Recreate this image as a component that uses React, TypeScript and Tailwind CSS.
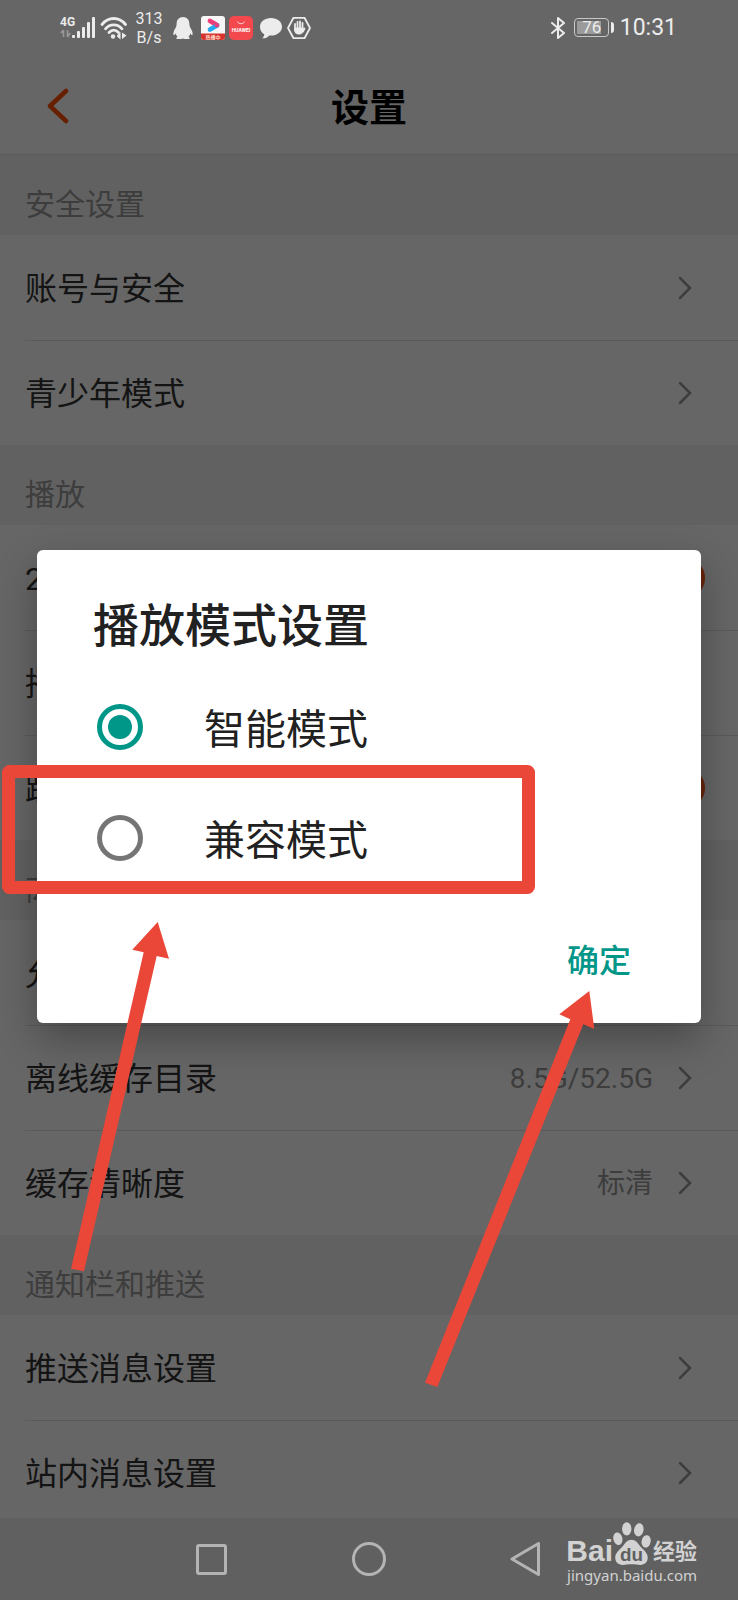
import { useState } from 'react'

type Row = { label: string; value?: string; toggle?: boolean }
type Section = { title: string; rows: Row[] }

const sections: Section[] = [
  { title: '安全设置', rows: [{ label: '账号与安全' }, { label: '青少年模式' }] },
  {
    title: '播放',
    rows: [
      { label: '2G/3G/4G网络播放', toggle: true },
      { label: '播放模式设置' },
      { label: '跳过片头片尾', toggle: true },
    ],
  },
  {
    title: '离线缓存',
    rows: [
      { label: '允许非WiFi缓存' },
      { label: '离线缓存目录', value: '8.5G/52.5G' },
      { label: '缓存清晰度', value: '标清' },
    ],
  },
  { title: '通知栏和推送', rows: [{ label: '推送消息设置' }, { label: '站内消息设置' }] },
]

const modes = ['智能模式', '兼容模式']

function StatusBar() {
  return (
    <div className="relative z-20 flex h-[54px] shrink-0 items-center justify-between pt-px pr-[61px] pl-[60px] text-[#ececec]">
      <div className="flex items-center">
        <svg className="h-6 w-9" viewBox="0 0 36 24" fill="currentColor">
          <text x="0" y="10" fontSize="12" fontWeight="700" fontFamily="Roboto, sans-serif">
            4G
          </text>
          <path d="M3.5 14v7M1 17l2.5-3M7.5 14v7M7.5 21l2.5-4z" stroke="#9a9a9a" strokeWidth="1.6" fill="none" />
          <rect x="12" y="19" width="3" height="3" rx="1" />
          <rect x="17" y="15" width="3" height="7" rx="1" />
          <rect x="22" y="11" width="3" height="11" rx="1" />
          <rect x="27" y="6" width="3" height="16" rx="1" />
          <rect x="32" y="1" width="3" height="21" rx="1" />
        </svg>
        <svg className="ml-1 h-6 w-[27px]" viewBox="0 0 27 24" fill="none" stroke="currentColor" strokeWidth="2.8" strokeLinecap="round">
          <path d="M2 8.5C8.500 0.500 19 0.500 25.500 8.500" />
          <path d="M5.500 12.800C10 7.500 17.500 7.500 22 12.800" />
          <path d="M9 16.500C12 13.300 15.500 13.300 18.500 16.500" />
          <circle cx="13" cy="20.500" r="2.200" fill="currentColor" stroke="none" />
          <path d="M17 19.500L20.500 16V23.500L17 20.500zM22 16.500L26.500 19.500L22 23z" fill="currentColor" stroke="none" />
        </svg>
        <div className="ml-2 w-7 text-center text-base leading-[19px]">
          313
          <br />
          B/s
        </div>
        <svg className="ml-2 h-6 w-6" viewBox="0 0 24 24" fill="currentColor">
          <path d="M12 1C7.800 1 5.600 4 5.600 8c0 2-.5 3-1.500 4.700C2.800 14.800 2 17 2.500 18.800c.4 1 1.300 0 2.100-1.200.3 1.300 1 2.400 2 3.300-1 .4-1.600.9-1.300 1.500.5.8 4.700.8 6.700 0 2 .8 6.200.8 6.700 0 .3-.6-.3-1.100-1.300-1.500 1-.9 1.700-2 2-3.300.8 1.200 1.700 2.200 2.100 1.200.5-1.800-.3-4-1.600-6.100-1-1.700-1.500-2.700-1.500-4.700C18.400 4 16.200 1 12 1z" />
        </svg>
        <svg className="ml-1.5 h-6 w-6" viewBox="0 0 24 24">
          <rect width="24" height="24" rx="3" fill="#f7f7f7" />
          <path d="M0 17.500h24V21a3 3 0 0 1-3 3H3a3 3 0 0 1-3-3z" fill="#d8322c" />
          <path d="M9 5L16 9" stroke="#ee3d79" strokeWidth="4.800" strokeLinecap="round" />
          <path d="M9 13.500L16 9.500" stroke="#24a8f0" strokeWidth="4.600" strokeLinecap="round" />
          <circle cx="15.800" cy="9.200" r="2.300" fill="#e9407c" />
          <text x="12" y="22.500" fontSize="5" fontWeight="700" fill="#ffd9c8" textAnchor="middle">
            热播中
          </text>
        </svg>
        <svg className="ml-1 h-6 w-6" viewBox="0 0 24 24">
          <rect width="24" height="24" rx="5" fill="#f2484e" />
          <path d="M8.500 5.500a3.600 3 0 0 0 7 0" fill="none" stroke="#ffd0d0" strokeWidth="1" />
          <text x="12" y="16" fontSize="5" fontWeight="700" fill="#fff" textAnchor="middle">
            HUAWEI
          </text>
        </svg>
        <svg className="ml-1.5 h-6 w-6" viewBox="0 0 24 24" fill="currentColor">
          <path d="M12 2c6.300 0 11 3.700 11 8.700s-4.700 8.800-11 8.800c-.6 0-1.200 0-1.800-.1C8.500 21.500 6 22.500 3.300 22.300c1.300-1.200 2-2.600 2-4C2.600 16.700 1 14.200 1 10.700 1 5.700 5.700 2 12 2z" />
        </svg>
        <svg className="ml-1 h-6 w-6" viewBox="0 0 24 24" fill="none" stroke="currentColor" strokeWidth="1.800" strokeLinejoin="round">
          <path d="M6.500 1.800h11L23 12l-5.500 10.200h-11L1 12z" />
          <path
            d="M8 14V8M10.500 12V6M13 12V5.500M15.500 12.500V7M17.500 12.500l-1.500 3"
            strokeWidth="1.800"
            strokeLinecap="round"
          />
          <path d="M7.100 11.500h9.300v2.500c0 2.500-1.500 4.500-4.400 4.500s-4.900-2-4.900-4.500z" fill="currentColor" stroke="none" />
        </svg>
      </div>
      <div className="flex items-center">
        <svg className="h-6 w-4" viewBox="0 0 16 24" fill="none" stroke="currentColor" strokeWidth="2" strokeLinejoin="round" strokeLinecap="round">
          <path d="M2 7l12 10-6 5V2l6 5L2 17" />
        </svg>
        <div className="ml-2 flex h-[19px] w-[35px] items-center rounded-[4px] border border-[#c8c8c8] p-0.5">
          <div className="flex h-full w-6 items-center justify-center bg-[#9b9b9b]">
            <span className="ml-1.5 text-[17px] leading-none">76</span>
          </div>
        </div>
        <div className="ml-0.5 h-[11px] w-[3px] rounded-r-sm bg-current" />
        <span className="ml-1.5 text-[23px] leading-none">10:31</span>
      </div>
    </div>
  )
}

function SettingRow({ row }: { row: Row }) {
  const [on, setOn] = useState(true)

  if (row.toggle) {
    return (
      <label className="flex h-[105px] items-center justify-between pr-[33px]">
        <span className="pt-0.5 text-[32px] leading-none">{row.label}</span>
        <input
          type="checkbox"
          role="switch"
          checked={on}
          onChange={() => setOn(!on)}
          className="h-10 w-20 appearance-none rounded-full bg-[#ffb699] before:block before:size-10 before:rounded-full before:bg-[#999] checked:before:ml-auto checked:before:bg-[#ff5a1f]"
        />
      </label>
    )
  }

  return (
    <button type="button" className="flex h-[105px] w-full items-center pr-[45px] text-left">
      <span className="flex-1 pt-0.5 text-[32px] leading-none">{row.label}</span>
      {row.value && <span className="pt-0.5 text-[28px] leading-none text-[#999]">{row.value}</span>}
      <svg className="ml-6 h-6 w-4" viewBox="0 0 16 24" fill="none" stroke="#999" strokeWidth="2.500" strokeLinecap="round">
        <path d="M3 2l10 10L3 22" />
      </svg>
    </button>
  )
}

function ModeDialog() {
  const [mode, setMode] = useState(modes[0])

  return (
    <div className="absolute inset-0 z-10 flex items-center bg-black/60 px-[37px] pb-[27px]">
      <div
        role="dialog"
        aria-labelledby="mode-title"
        className="w-full rounded-md bg-white pt-[51px] pb-9 text-[#212121] shadow-[0_16px_40px_rgba(0,0,0,0.3)]"
      >
        <h2 id="mode-title" className="pl-14 text-[46px] leading-[50px] font-medium">
          播放模式设置
        </h2>
        <div className="pt-5">
          {modes.map((m) => (
            <label key={m} className="flex h-[111px] items-center pl-[60px]">
              <input
                type="radio"
                name="mode"
                checked={mode === m}
                onChange={() => setMode(m)}
                className="grid size-[46px] appearance-none place-items-center rounded-full border-[5px] border-[#757575] before:size-6 before:rounded-full checked:border-[#009688] checked:before:bg-[#009688]"
              />
              <span className="ml-[61px] pt-2 text-[41px] leading-none">{m}</span>
            </label>
          ))}
        </div>
        <div className="flex justify-end pt-[42px] pr-[70px]">
          <button type="button" className="text-[32px] leading-[52px] font-medium text-[#009688]">
            确定
          </button>
        </div>
      </div>
    </div>
  )
}

function Annotations() {
  return (
    <svg className="pointer-events-none absolute top-0 left-0 z-30 h-[1600px] w-[738px]" viewBox="0 0 738 1600" fill="#ea4738">
      <rect x="8.500" y="771.500" width="520" height="116" rx="1" fill="none" stroke="#ea4738" strokeWidth="13" strokeLinejoin="round" />
      <path d="M157.700 922L169 958.700L156.700 956L84 1271.300L71 1268.700L143.700 952.300L132.300 949.700z" />
      <path d="M589.300 991L594.300 1029L583.300 1024.300L437.300 1387L425 1382.700L570.300 1019.300L559.300 1014.300z" />
    </svg>
  )
}

function Watermark() {
  return (
    <div className="absolute right-[41px] bottom-4 text-[#d2d2d2]">
      <div className="flex items-end justify-end">
        <span className="font-['Liberation_Sans',sans-serif] text-[30px] leading-[30px] font-bold">Bai</span>
        <svg className="h-11 w-[38px]" viewBox="0 0 36 42" fill="currentColor">
          <ellipse cx="4.500" cy="16" rx="4.300" ry="6" transform="rotate(-12 4.500 16)" />
          <ellipse cx="13" cy="6.500" rx="4.500" ry="6.300" />
          <ellipse cx="24.500" cy="7.500" rx="4.500" ry="6.300" transform="rotate(10 24.500 7.500)" />
          <ellipse cx="31.500" cy="18.500" rx="4.300" ry="6" transform="rotate(12 31.500 18.500)" />
          <path d="M17.500 17c4 0 6 3 8.500 6.500 3 3.500 7 6 7 10.500 0 4.500-3 7-7 7-3 0-5-.7-8.500-.7S12 41 9 41c-4 0-7-2.500-7-7 0-4.500 4-7 7-10.500C11.500 20 13.500 17 17.500 17z" />
          <text x="17.500" y="37.500" fontSize="18" fontWeight="700" fill="#606060" textAnchor="middle" fontFamily="Liberation Sans, sans-serif">
            du
          </text>
        </svg>
        <span className="ml-0.5 text-[22px] leading-[28px] font-bold">经验</span>
      </div>
      <div className="text-right font-['Noto_Sans',sans-serif] text-[15px] leading-[18px]">jingyan.baidu.com</div>
    </div>
  )
}

function NavBar() {
  return (
    <nav className="relative z-20 flex h-[82px] shrink-0 items-center justify-center gap-[124px] bg-[#606060] text-[#b4b4b4]">
      <button type="button" aria-label="Recents" className="flex size-[34px] items-center justify-center">
        <span className="size-[31px] rounded-[3px] border-[3px] border-current" />
      </button>
      <button type="button" aria-label="Home" className="size-[34px] rounded-full border-[3px] border-current" />
      <button type="button" aria-label="Back" className="size-[34px]">
        <svg viewBox="0 0 34 34" fill="none" stroke="currentColor" strokeWidth="3" strokeLinejoin="round">
          <path d="M28.500 1.500v31L2 17z" />
        </svg>
      </button>
      <Watermark />
    </nav>
  )
}

export default function App() {
  return (
    <div className="relative flex h-screen flex-col overflow-hidden bg-white font-[Roboto,'Noto_Sans_CJK_SC',sans-serif] text-[#333]">
      <StatusBar />
      <header className="grid h-[101px] shrink-0 grid-cols-[1fr_auto_1fr] items-center border-b border-[#e5e5e5] pt-1">
        <button type="button" aria-label="Back" className="ml-[46px] w-6">
          <svg className="h-9 w-6" viewBox="0 0 24 36" fill="none" stroke="#ff5000" strokeWidth="4.500" strokeLinecap="round" strokeLinejoin="round">
            <path d="M20 3L4 18l16 15" />
          </svg>
        </button>
        <h1 className="pt-1 text-[38px] leading-none font-bold text-black">设置</h1>
      </header>
      <main className="min-h-0 flex-1 overflow-hidden">
        {sections.map((s) => (
          <section key={s.title}>
            <h2 className="flex h-20 items-center bg-[#f3f3f3] pt-5 pl-[25px] text-[30px] leading-none text-[#999]">{s.title}</h2>
            <ul className="pl-[25px]">
              {s.rows.map((r) => (
                <li key={r.label} className="border-[#e0e0e0] not-last:-mb-px not-last:border-b">
                  <SettingRow row={r} />
                </li>
              ))}
            </ul>
          </section>
        ))}
      </main>
      <ModeDialog />
      <NavBar />
      <Annotations />
    </div>
  )
}
